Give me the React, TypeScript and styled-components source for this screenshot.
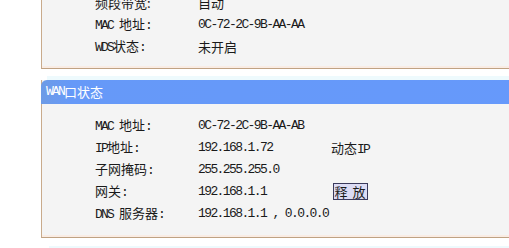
import React from "react";
import styled, { createGlobalStyle } from "styled-components";

const Global = createGlobalStyle`
  html, body { margin: 0; padding: 0; background: #ffffff; overflow: hidden; }
  body { width: 509px; height: 248px; }
`;

const Page = styled.div`
  width: 509px;
  height: 248px;
  overflow: hidden;
  padding-left: 41px;
  box-sizing: border-box;
`;

const Panel = styled.div<{ $offset?: number }>`
  margin-top: ${(p) => p.$offset ?? 0}px;
  width: 520px;
  background: #f4f4f4;
  border-left: 1px solid #c9ab8c;
  border-bottom: 1px solid #bfa283;
  box-shadow: inset 0 -2px 0 #f9ece4;
  box-sizing: border-box;
`;

const Header = styled.div`
  height: 24px;
  margin-left: -1px;
  background: linear-gradient(90deg, #6d9be6 0px, #6699f8 30px, #6699fb 100%);
  border-top-left-radius: 6px;
  color: #ffffff;
  font-family: "Noto Sans CJK SC", sans-serif;
  font-size: 13px;
  line-height: 24px;
  padding-left: 5px;
  display: flex;
  align-items: center;
`;

const Body = styled.div<{ $top: number; $bottom: number }>`
  padding: ${(p) => p.$top}px 0 ${(p) => p.$bottom}px 53px;
  display: grid;
  grid-template-columns: 103px 133px auto;
  grid-auto-rows: 22px;
  align-items: center;
`;

const Label = styled.div`
  font-family: "Noto Sans CJK SC", sans-serif;
  font-size: 13px;
  color: #1a1a1a;
  white-space: pre;
  line-height: 15px;
`;

const Lat = styled.span<{ $light?: boolean }>`
  font-family: "Liberation Mono", "DejaVu Sans Mono", monospace;
  font-size: 13px;
  letter-spacing: -1.8px;
  color: ${(p) => (p.$light ? "#ffffff" : "#1a1a1a")};
`;

const Value = styled.div`
  font-family: "Liberation Mono", "DejaVu Sans Mono", monospace;
  font-size: 13px;
  letter-spacing: -1.6px;
  color: #1a1a1a;
  white-space: pre;
`;

const CnValue = styled.div`
  font-family: "Noto Sans CJK SC", sans-serif;
  font-size: 13px;
  color: #1a1a1a;
  white-space: pre;
`;

const Extra = styled.div`
  display: flex;
  align-items: center;
`;

const Button = styled.button`
  width: 35px;
  height: 17px;
  margin-left: 2px;
  padding: 0;
  background: #dcdcf4;
  border: 1px solid #3a3a5c;
  border-radius: 0;
  font-family: "Noto Sans CJK SC", sans-serif;
  font-size: 13px;
  line-height: 15px;
  color: #1a1a1a;
  letter-spacing: 1px;
  cursor: pointer;
`;

const Glow = styled.div<{ $left: number; $gap: number }>`
  margin-top: ${(p) => p.$gap}px;
  margin-left: ${(p) => p.$left}px;
  height: 4px;
  background: #eefafd;
`;

type Row = { label: React.ReactNode; value: React.ReactNode; extra?: React.ReactNode };

const topRows: Row[] = [
  { label: "频段带宽:", value: <CnValue>自动</CnValue> },
  { label: <><Lat>MAC </Lat>地址<Lat>:</Lat></>, value: <Value>0C-72-2C-9B-AA-AA</Value> },
  { label: <><Lat>WDS</Lat>状态<Lat>:</Lat></>, value: <CnValue>未开启</CnValue> },
];

const wanRows: Row[] = [
  { label: <><Lat>MAC </Lat>地址<Lat>:</Lat></>, value: <Value>0C-72-2C-9B-AA-AB</Value> },
  {
    label: <><Lat>IP</Lat>地址<Lat>:</Lat></>,
    value: <Value>192.168.1.72</Value>,
    extra: <CnValue>动态<Lat>IP</Lat></CnValue>,
  },
  { label: <>子网掩码<Lat>:</Lat></>, value: <Value>255.255.255.0</Value> },
  {
    label: <>网关<Lat>:</Lat></>,
    value: <Value>192.168.1.1</Value>,
    extra: <Button>释 放</Button>,
  },
  { label: <><Lat>DNS </Lat>服务器<Lat>:</Lat></>, value: <Value>192.168.1.1 , 0.0.0.0</Value> },
];

const Rows = ({ rows }: { rows: Row[] }) => (
  <>
    {rows.map((r, i) => (
      <React.Fragment key={i}>
        <Label>{r.label}</Label>
        {r.value}
        <Extra>{r.extra}</Extra>
      </React.Fragment>
    ))}
  </>
);

export default function App() {
  return (
    <Page>
      <Global />
      <Panel $offset={-9}>
        <Body $top={0} $bottom={11}>
          <Rows rows={topRows} />
        </Body>
      </Panel>
      <Glow $left={6} $gap={7} />
      <Panel>
        <Header>
          <Lat $light>WAN</Lat>口状态
        </Header>
        <Body $top={10} $bottom={13}>
          <Rows rows={wanRows} />
        </Body>
      </Panel>
      <Glow $left={8} $gap={8} />
    </Page>
  );
}
